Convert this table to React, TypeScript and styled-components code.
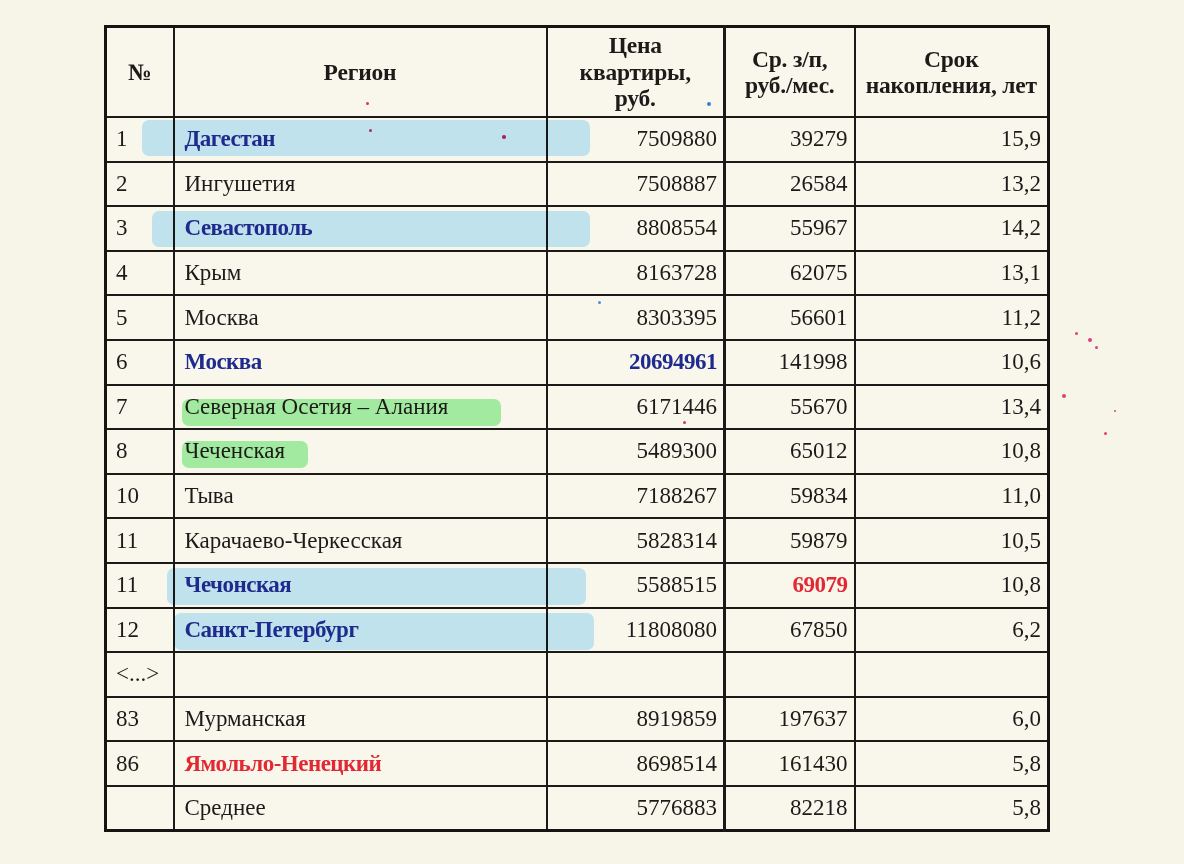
import React from "react";
import styled, { createGlobalStyle } from "styled-components";

const GlobalStyle = createGlobalStyle`
  html, body {
    margin: 0;
    padding: 0;
    background: #f7f5e8;
  }
  body {
    font-family: "Liberation Serif", "DejaVu Serif", serif;
    color: #1c1b19;
  }
`;

const Page = styled.div`
  position: relative;
  width: 1184px;
  height: 864px;
  padding: 25px 0 0 104px;
  box-sizing: border-box;
  background: #f7f5e8;
  overflow: hidden;
`;

const Table = styled.table`
  border-collapse: collapse;
  table-layout: fixed;
  width: 943px;
  border: 3px solid #151412;
  background: #f9f7ec;
`;

const Col = styled.col<{ $w: number }>`
  width: ${(p) => p.$w}px;
`;

const HeadCell = styled.th<{ $strongLeft?: boolean }>`
  height: 88px;
  padding: 0 2px;
  border: 2px solid #1b1a18;
  border-left-width: ${(p) => (p.$strongLeft ? "3px" : "2px")};
  font-size: 23.5px;
  line-height: 26.5px;
  font-weight: 700;
  text-align: center;
  vertical-align: middle;
  color: #1c1b19;
  white-space: nowrap;
  letter-spacing: -0.2px;
`;

const Row = styled.tr`
  height: 44.6px;
`;

const Cell = styled.td<{ $align?: "left" | "right"; $strongLeft?: boolean }>`
  position: relative;
  padding: 0 ${(p) => (p.$align === "right" ? "6px" : "10px")};
  border: 2px solid #1b1a18;
  border-left-width: ${(p) => (p.$strongLeft ? "3px" : "2px")};
  font-size: 23px;
  line-height: 26px;
  text-align: ${(p) => p.$align ?? "left"};
  vertical-align: middle;
  white-space: nowrap;
  overflow: visible;
`;

const NumCell = styled(Cell)`
  padding-left: 9px;
  padding-right: 0;
`;

const Label = styled.span<{ $tone?: "blue" | "red"; $bold?: boolean }>`
  position: relative;
  z-index: 2;
  font-weight: ${(p) => (p.$bold ? 700 : 400)};
  color: ${(p) =>
    p.$tone === "blue" ? "#1f2a8e" : p.$tone === "red" ? "#e22833" : "#1c1b19"};
  letter-spacing: ${(p) => (p.$bold ? "-0.5px" : "0")};
`;

const Marker = styled.span<{ $color: string; $l: number; $t: number; $w: number; $h: number }>`
  position: absolute;
  z-index: 1;
  left: ${(p) => p.$l}px;
  top: ${(p) => p.$t}px;
  width: ${(p) => p.$w}px;
  height: ${(p) => p.$h}px;
  background: ${(p) => p.$color};
  border-radius: 7px;
  mix-blend-mode: multiply;
  filter: blur(0.6px);
`;

const Speck = styled.span<{ $x: number; $y: number; $s: number; $c: string }>`
  position: absolute;
  left: ${(p) => p.$x}px;
  top: ${(p) => p.$y}px;
  width: ${(p) => p.$s}px;
  height: ${(p) => p.$s}px;
  border-radius: 50%;
  background: ${(p) => p.$c};
  pointer-events: none;
`;

type Hl = { color: string; l: number; t: number; w: number; h: number };

type RowData = {
  n: string;
  region: string;
  price: string;
  salary: string;
  years: string;
  tone?: "blue" | "red";
  hl?: Hl;
  priceTone?: "blue";
  salaryTone?: "red";
};

const BLUE = "#c5eaff";
const GREEN = "#a6f2ac";

const rows: RowData[] = [
  { n: "1", region: "Дагестан", price: "7509880", salary: "39279", years: "15,9", tone: "blue", hl: { color: BLUE, l: -33, t: 2, w: 448, h: 36 } },
  { n: "2", region: "Ингушетия", price: "7508887", salary: "26584", years: "13,2" },
  { n: "3", region: "Севастополь", price: "8808554", salary: "55967", years: "14,2", tone: "blue", hl: { color: BLUE, l: -23, t: 4, w: 438, h: 36 } },
  { n: "4", region: "Крым", price: "8163728", salary: "62075", years: "13,1" },
  { n: "5", region: "Москва", price: "8303395", salary: "56601", years: "11,2" },
  { n: "6", region: "Москва", price: "20694961", salary: "141998", years: "10,6", tone: "blue", priceTone: "blue" },
  { n: "7", region: "Северная Осетия – Алания", price: "6171446", salary: "55670", years: "13,4", hl: { color: GREEN, l: 7, t: 13, w: 319, h: 27 } },
  { n: "8", region: "Чеченская", price: "5489300", salary: "65012", years: "10,8", hl: { color: GREEN, l: 7, t: 11, w: 126, h: 27 } },
  { n: "10", region: "Тыва", price: "7188267", salary: "59834", years: "11,0" },
  { n: "11", region: "Карачаево-Черкесская", price: "5828314", salary: "59879", years: "10,5" },
  { n: "11", region: "Чечонская", price: "5588515", salary: "69079", years: "10,8", tone: "blue", salaryTone: "red", hl: { color: BLUE, l: -8, t: 4, w: 419, h: 37 } },
  { n: "12", region: "Санкт-Петербург", price: "11808080", salary: "67850", years: "6,2", tone: "blue", hl: { color: BLUE, l: -1, t: 4, w: 420, h: 37 } },
  { n: "<...>", region: "", price: "", salary: "", years: "" },
  { n: "83", region: "Мурманская", price: "8919859", salary: "197637", years: "6,0" },
  { n: "86", region: "Ямольло-Ненецкий", price: "8698514", salary: "161430", years: "5,8", tone: "red" },
  { n: "", region: "Среднее", price: "5776883", salary: "82218", years: "5,8" },
];

const specks = [
  { x: 366, y: 102, s: 3, c: "#d8306a" },
  { x: 369, y: 129, s: 3, c: "#d8306a" },
  { x: 502, y: 135, s: 4, c: "#d02060" },
  { x: 707, y: 102, s: 4, c: "#3b7fcf" },
  { x: 598, y: 301, s: 3, c: "#4a90d0" },
  { x: 683, y: 421, s: 3, c: "#d8306a" },
  { x: 1075, y: 332, s: 3, c: "#e0407a" },
  { x: 1088, y: 338, s: 4, c: "#e0407a" },
  { x: 1095, y: 346, s: 3, c: "#e0407a" },
  { x: 1062, y: 394, s: 4, c: "#e0407a" },
  { x: 1114, y: 410, s: 2, c: "#e0407a" },
  { x: 1104, y: 432, s: 3, c: "#e0407a" },
];

export default function App() {
  return (
    <Page>
      <GlobalStyle />
      <Table>
        <colgroup>
          <Col $w={68} />
          <Col $w={373} />
          <Col $w={178} />
          <Col $w={130} />
          <Col $w={194} />
        </colgroup>
        <thead>
          <tr>
            <HeadCell>№</HeadCell>
            <HeadCell>Регион</HeadCell>
            <HeadCell>
              Цена
              <br />
              квартиры,
              <br />
              руб.
            </HeadCell>
            <HeadCell $strongLeft>
              Ср. з/п,
              <br />
              руб./мес.
            </HeadCell>
            <HeadCell>
              Срок
              <br />
              накопления, лет
            </HeadCell>
          </tr>
        </thead>
        <tbody>
          {rows.map((r, i) => (
            <Row key={i}>
              <NumCell>{r.n}</NumCell>
              <Cell>
                {r.hl && <Marker $color={r.hl.color} $l={r.hl.l} $t={r.hl.t} $w={r.hl.w} $h={r.hl.h} />}
                <Label $tone={r.tone} $bold={!!r.tone}>
                  {r.region}
                </Label>
              </Cell>
              <Cell $align="right">
                <Label $tone={r.priceTone} $bold={!!r.priceTone}>
                  {r.price}
                </Label>
              </Cell>
              <Cell $align="right" $strongLeft>
                <Label $tone={r.salaryTone} $bold={!!r.salaryTone}>
                  {r.salary}
                </Label>
              </Cell>
              <Cell $align="right">
                <Label>{r.years}</Label>
              </Cell>
            </Row>
          ))}
        </tbody>
      </Table>
      {specks.map((s, i) => (
        <Speck key={i} $x={s.x} $y={s.y} $s={s.s} $c={s.c} />
      ))}
    </Page>
  );
}
